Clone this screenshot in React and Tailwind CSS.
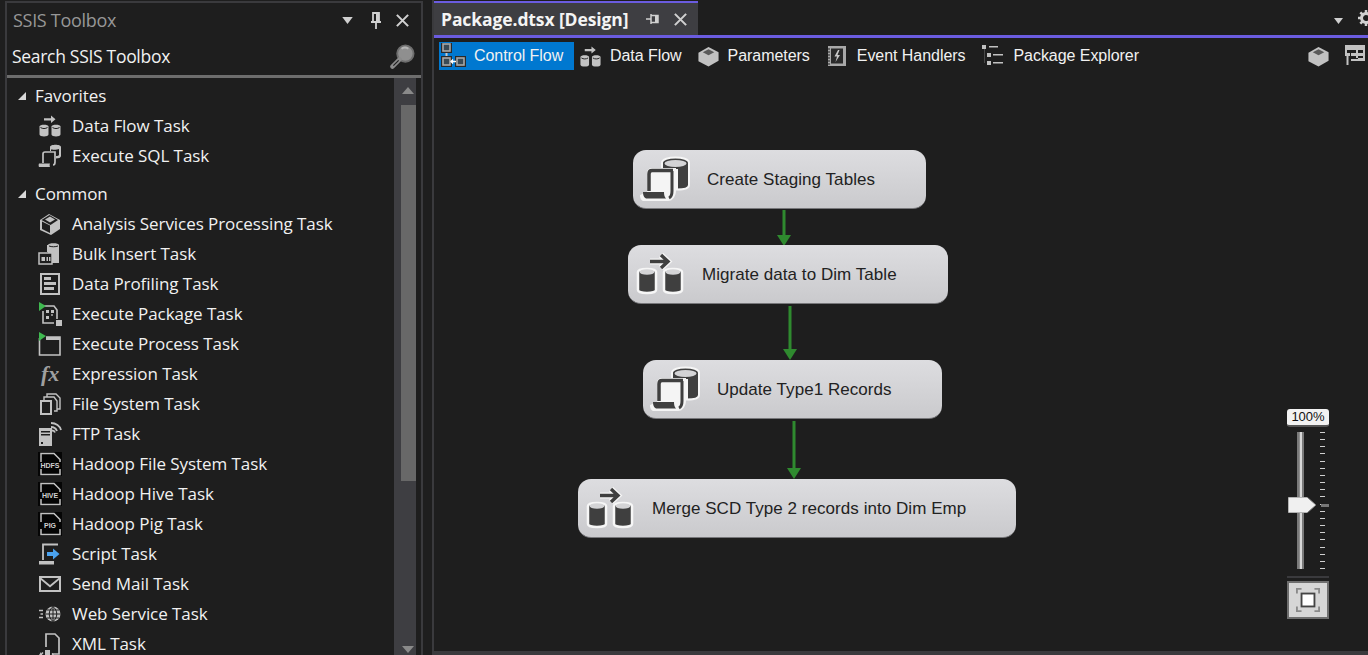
import React from 'react';

const SEGOE = "font-['Open_Sans',sans-serif]";

// ---- small task icons, all on a 24 box ----
const Box = ({ children, className = 'w-6 h-6', fill = '#c2c2c2' }) => (
  <svg viewBox="0 0 24 24" className={`${className} shrink-0`} fill={fill}>{children}</svg>
);

const DataFlowIcon = ({ className }) => (
  <Box className={className}>
    <path d="M6 4.200h7V1.500l4.500 3.700L13 8.900V6.400H6z" />
    <path d="M1.500 12.500c0-2.400 9-2.400 9 0v8c0 2.600-9 2.600-9 0z" />
    <path d="M13.500 12.500c0-2.400 9-2.400 9 0v8c0 2.600-9 2.600-9 0z" />
    <path d="M2.500 13.500c2 1.400 5 1.400 7 0M14.500 13.500c2 1.400 5 1.400 7 0" stroke="#1e1e1e" fill="none" />
  </Box>
);

const ExecSqlIcon = ({ className }) => (
  <Box className={className}>
    <path d="M12 3c0-3 11-3 11 0v9c0 1.700-2.500 2.500-5 2.500V12c1.500 0 3-.5 3-1V5c-2 1-7 1-8 .3V7h-1z" />
    <path d="M5 19V10c0-1 1-2 2-2h10v10c0 2-1 3-2 3" stroke="#c2c2c2" strokeWidth="1.700" fill="none" />
    <path d="M1 23c-.5-1-.5-2.500 0-3.500h11c-.5 1-.5 2.500 0 3.500z" />
  </Box>
);

const CubeIcon = ({ className }) => (
  <Box className={className}>
    <path d="M1.500 8L12 2l10.500 5.500v9L12 22.500 1.500 17z" />
    <path d="M6 7.500L12 4.500l6 3-6 3.200z" fill="#5a5a5a" />
  </Box>
);

const AnalysisIcon = () => (
  <Box>
    <path d="M2 8l9-6 11 6v9l-9 6-11-5z" />
    <path d="M3.500 8l8-5 8.500 5-7.500 5z" fill="#1e1e1e" />
    <path d="M4 9.500l8 4v7.500l-8-4z" fill="#1e1e1e" />
    <path d="M7 7.500l5-3 5 3-5 3z" fill="#c2c2c2" />
  </Box>
);

const BulkIcon = () => (
  <Box>
    <path d="M10 3c0-2.400 11-2.400 11 0v18H10V10h-1V3z" />
    <path d="M11 4c2.500 1 6.500 1 9 0" stroke="#1e1e1e" fill="none" />
    <rect x="1" y="11" width="13" height="11" fill="#1e1e1e" stroke="#c2c2c2" strokeWidth="1.500" />
    <rect x="3.500" y="15" width="3.500" height="4" />
    <rect x="8.500" y="15" width="1.500" height="4" />
    <rect x="11" y="15" width="1.500" height="4" />
  </Box>
);

const ProfilingIcon = () => (
  <Box>
    <path d="M3 2h18v20H3z" fill="none" stroke="#c2c2c2" strokeWidth="2" />
    <rect x="6" y="5" width="7" height="3" />
    <rect x="6" y="10" width="12" height="3" />
    <rect x="6" y="15" width="10" height="3" />
  </Box>
);

const FlagTriangle = () => <path d="M1 0l7 4-7 5z" fill="#3fb950" />;

const ExecPackageIcon = () => (
  <Box>
    <path d="M6 4h10l3 4v9" fill="none" stroke="#c2c2c2" strokeWidth="1.600" />
    <path d="M5 9v12h11" fill="none" stroke="#c2c2c2" strokeWidth="1.600" />
    <rect x="8" y="8" width="3" height="3" />
    <rect x="13" y="8" width="3" height="3" />
    <rect x="8" y="14" width="3" height="3" />
    <rect x="13" y="12" width="2" height="2" fill="#8a8a8a" />
    <rect x="18" y="18" width="6" height="6" />
    <FlagTriangle />
  </Box>
);

const ExecProcessIcon = () => (
  <Box>
    <path d="M1.500 6v17h20.500V5H8" fill="none" stroke="#c2c2c2" strokeWidth="1.600" />
    <rect x="8" y="5" width="14" height="3" />
    <FlagTriangle />
  </Box>
);

const FileSystemIcon = () => (
  <Box>
    <path d="M9 5V2h9l4 4v11h-3" fill="none" stroke="#c2c2c2" strokeWidth="1.400" />
    <path d="M6 8V5h10l3 4v10h-3" fill="none" stroke="#c2c2c2" strokeWidth="1.400" />
    <path d="M3 9h10v13H3z" fill="none" stroke="#c2c2c2" strokeWidth="2" />
  </Box>
);

const FtpIcon = () => (
  <Box>
    <path d="M1 6h13v18H1z" />
    <rect x="3" y="9" width="9" height="1.500" fill="#1e1e1e" />
    <rect x="3" y="12" width="9" height="1.500" fill="#1e1e1e" />
    <rect x="3" y="20" width="2" height="2" fill="#1e1e1e" />
    <path d="M13 1c5 0 9 3 10 7M13 5c3 0 5 1.500 6 4M14 8.500c1.500 0 2.500.5 3 2" fill="none" stroke="#c2c2c2" strokeWidth="1.800" />
  </Box>
);

const HadoopIcon = ({ label }) => (
  <svg viewBox="0 0 24 24" className="w-6 h-6 shrink-0">
    <rect width="24" height="24" fill="#050505" />
    <path d="M3 10V1.500h13l6 6V10M3 17v5.500h19V17" fill="none" stroke="#c2c2c2" strokeWidth="1.500" />
    <text x="12" y="16" textAnchor="middle" fontSize="7" fontWeight="700" fontFamily="Liberation Sans" fill="#d0d0d0">{label}</text>
  </svg>
);

const ScriptIcon = () => (
  <Box>
    <path d="M5 18V2.500h15" fill="none" stroke="#c2c2c2" strokeWidth="1.800" />
    <path d="M1 22.500v-3.500h15v3.500z" />
    <path d="M9 10h6V6.500l6.500 5.500-6.500 5.500V14H9z" fill="#4aa3f0" />
  </Box>
);

const MailIcon = () => (
  <Box>
    <path fillRule="evenodd" d="M1 4h22v16H1zM3.500 6l8.500 7 8.500-7zM3 8v10h18V8l-9 7.500z" />
  </Box>
);

const WebIcon = () => (
  <Box>
    <circle cx="15" cy="12" r="7.500" />
    <path d="M7.500 12h15M15 4.500v15M9 8h12M9 16h12M15 4.500c-5 4-5 11 0 15M15 4.500c5 4 5 11 0 15" stroke="#1e1e1e" fill="none" />
    <path d="M1 8.500h4M2.500 12h2.500M1 15.500h4" stroke="#c2c2c2" strokeWidth="1.500" />
  </Box>
);

const XmlIcon = () => (
  <Box>
    <path d="M8 15V2h9l4 4v16h-7" fill="none" stroke="#c2c2c2" strokeWidth="1.700" />
    <rect x="7" y="18" width="5" height="6" />
    <path d="M2 24l3-3.500M16 24l-2-2.500" stroke="#c2c2c2" fill="none" strokeWidth="1.400" />
    <path d="M1 23l2-3 1 4z" />
  </Box>
);

const FxIcon = () => (
  <span className="w-6 h-6 shrink-0 flex items-center justify-center font-['Liberation_Serif',serif] italic font-bold text-[22px] leading-none text-[#a0a0a0]">fx</span>
);

const SearchIcon = () => (
  <svg viewBox="0 0 26 26" className="w-[25px] h-[25px]">
    <circle cx="16" cy="10" r="8.500" fill="#8f8f8f" stroke="#6e6e6e" strokeWidth="2" />
    <path d="M12 5c2-1.500 5-1.500 7 0" stroke="#b5b5b5" strokeWidth="2" fill="none" />
    <path d="M10 16L2.500 23.500" stroke="#8a8a8a" strokeWidth="4.500" strokeLinecap="round" />
    <path d="M3.500 22.500L9 17" stroke="#1e1e1e" strokeWidth="1.200" />
  </svg>
);

const Cross = ({ className, color = '#d0d0d0' }) => (
  <svg viewBox="0 0 16 16" className={className}>
    <path d="M2 2l12 12M14 2L2 14" stroke={color} strokeWidth="2.200" fill="none" />
  </svg>
);

const DownCaret = ({ className = 'w-3.5 h-2' }) => (
  <svg viewBox="0 0 14 8" className={className}><path d="M1 0h12L7 8z" fill="#d0d0d0" /></svg>
);

const Expander = () => (
  <svg viewBox="0 0 10 10" className="w-[10px] h-[10px] shrink-0"><path d="M9 1v8H1z" fill="#d8d8d8" /></svg>
);

const Task = ({ icon, label }) => (
  <div className="flex items-center h-[30px] pl-[33px] gap-[10px] whitespace-nowrap">
    {icon}
    <span>{label}</span>
  </div>
);

const Category = ({ label, className = '' }) => (
  <div className={`flex items-center h-[30px] pl-[12px] gap-[8px] ${className}`}>
    <Expander />
    <span>{label}</span>
  </div>
);

const COMMON_TASKS = [
  ['Analysis Services Processing Task', <AnalysisIcon />],
  ['Bulk Insert Task', <BulkIcon />],
  ['Data Profiling Task', <ProfilingIcon />],
  ['Execute Package Task', <ExecPackageIcon />],
  ['Execute Process Task', <ExecProcessIcon />],
  ['Expression Task', <FxIcon />],
  ['File System Task', <FileSystemIcon />],
  ['FTP Task', <FtpIcon />],
  ['Hadoop File System Task', <HadoopIcon label="HDFS" />],
  ['Hadoop Hive Task', <HadoopIcon label="HIVE" />],
  ['Hadoop Pig Task', <HadoopIcon label="PIG" />],
  ['Script Task', <ScriptIcon />],
  ['Send Mail Task', <MailIcon />],
  ['Web Service Task', <WebIcon />],
  ['XML Task', <XmlIcon />],
];

const Toolbox = () => (
  <aside className={`ml-[5px] mt-[1px] w-[418px] shrink-0 flex flex-col border-x-2 border-t-2 border-[#3a3a3d] ${SEGOE} text-[#f1f1f1] text-[17px] tracking-[-0.06px]`}>
    <div className="flex items-center h-[35px] pl-[6px] pr-[11px] text-[18px] tracking-[-0.3px] text-[#979797]">
      <span className="flex-1">SSIS Toolbox</span>
      <DownCaret className="w-[13px] h-[7px] mr-[16px]" />
      <svg viewBox="0 0 12 18" className="w-[12px] h-[18px] mr-[13px]">
        <path d="M3 1h6v9H3zM1 10h10M6 10v7" stroke="#d0d0d0" strokeWidth="1.800" fill="none" />
        <rect x="6" y="1" width="3" height="9" fill="#d0d0d0" />
      </svg>
      <Cross className="w-[15px] h-[15px]" />
    </div>
    <div className="flex items-center h-[40px] pl-[5px] pr-[6px] border-b-[3px] border-[#6d6d6d] text-[17.5px] tracking-[-0.3px]">
      <span className="flex-1">Search SSIS Toolbox</span>
      <SearchIcon />
    </div>
    <div className="flex flex-1 min-h-0 overflow-hidden">
      <div className="flex-1 pt-[3px] overflow-hidden -ml-[2px]">
        <Category label="Favorites" />
        <Task icon={<DataFlowIcon />} label="Data Flow Task" />
        <Task icon={<ExecSqlIcon />} label="Execute SQL Task" />
        <Category label="Common" className="mt-[8px]" />
        {COMMON_TASKS.map(([label, icon]) => <Task key={label} icon={icon} label={label} />)}
      </div>
      {/* scrollbar */}
      <div className="w-[22px] bg-[#3e3e42] flex flex-col items-end shrink-0 mr-[5px] relative">
        <div className="w-full flex justify-center pl-[5px] pt-[9px] h-[27px]">
          <svg viewBox="0 0 12 7" className="w-3 h-[7px]"><path d="M6 0l6 7H0z" fill="#8a8a8a" /></svg>
        </div>
        <div className="w-[15px] h-[376px] bg-[#686868]" />
        <div className="w-full flex justify-center pl-[5px] mt-[165px]">
          <svg viewBox="0 0 12 7" className="w-3 h-[7px]"><path d="M0 0h12L6 7z" fill="#8a8a8a" /></svg>
        </div>
      </div>
    </div>
  </aside>
);

// ---- designer toolbar icons ----
const FlowBox = ({ x, y }) => (
  <g>
    <rect x={x - 2} y={y - 2} width="11" height="11" fill="#2a2a2a" />
    <rect x={x} y={y} width="7" height="7" fill="#3a4a55" stroke="#a8a8a8" strokeWidth="1.600" />
  </g>
);

const ControlFlowIcon = () => (
  <svg viewBox="0 0 26 26" className="w-[26px] h-[26px] shrink-0">
    <path d="M6.500 8v7" stroke="#c8c8c8" strokeWidth="2" />
    <FlowBox x={3} y={1} />
    <FlowBox x={3} y={15} />
    <FlowBox x={17} y={15} />
    <path d="M11 18.500h5M13 16.500l-2 2 2 2" stroke="#fff" strokeWidth="1.300" fill="none" />
  </svg>
);

const EventIcon = () => (
  <svg viewBox="0 0 20 20" className="w-5 h-5 shrink-0">
    <rect x="1" y="0" width="18" height="20" fill="#a8a8a8" />
    <rect x="4" y="2.500" width="12" height="15" fill="#2a2a2a" />
    <path d="M11 4L7.500 10.500h2.500L8.500 16l4.500-7h-2.500L12.500 4z" fill="#c8c8c8" />
    <path d="M1 3h2M1 6h2M1 9h2M1 12h2M1 15h2M1 18h2" stroke="#1e1e1e" />
  </svg>
);

const ExplorerIcon = () => (
  <svg viewBox="0 0 22 22" className="w-[22px] h-[22px] shrink-0" fill="#c2c2c2">
    <rect x="0" y="0" width="4" height="4" />
    <rect x="7" y="1" width="9" height="1.500" />
    <rect x="5" y="8" width="4" height="4" />
    <rect x="11" y="9" width="10" height="1.500" />
    <rect x="5" y="16" width="4" height="4" />
    <rect x="11" y="17" width="10" height="1.500" />
    <rect x="2" y="4" width="1" height="14" fill="#4a4a4a" />
  </svg>
);

const VarGridIcon = () => (
  <svg viewBox="0 0 22 24" className="w-[22px] h-6 shrink-0" fill="#c2c2c2">
    <path d="M2 1h20v16H8v-2h12v-3h-5v2h-2v-2H8V9h5V6H4v3H2zM15 6v3h5V6zM15 14v1h5v-1z" />
    <rect x="2" y="9" width="5" height="3" />
    <rect x="3.500" y="12" width="2" height="9" />
  </svg>
);

const ToolItem = ({ icon, label, className = '' }) => (
  <div className={`flex items-center h-7 whitespace-nowrap ${className}`}>
    {icon}
    <span>{label}</span>
  </div>
);

// ---- node icons: same shapes in dark with a white halo ----
const NodeCylinder = ({ x }) => (
  <g transform={`translate(${x} 0)`}>
    <path d="M0 18c0-4 18-4 18 0v18c0 4-18 4-18 0z" fill="#3f3f3f" stroke="#f6f6f6" strokeWidth="2.500" />
    <ellipse cx="9" cy="18" rx="7.500" ry="2.800" fill="#d4d4d6" />
  </g>
);

const NodeFlowIcon = () => (
  <svg viewBox="0 0 52 42" className="w-[52px] h-[42px]">
    <g transform="translate(2 1)">
      <path d="M13 7.500h18M24 1l7 6.500-7 6.500" stroke="#f6f6f6" strokeWidth="6" fill="none" />
      <path d="M13 7.500h18M24 1l7 6.500-7 6.500" stroke="#3f3f3f" strokeWidth="3.400" fill="none" />
      <NodeCylinder x={1} />
      <NodeCylinder x={27} />
    </g>
  </svg>
);

const NodeSqlIcon = () => (
  <svg viewBox="0 0 52 46" className="w-[52px] h-[46px]">
    <path d="M22 7c0-7.500 27-7.500 27 0v22c0 3-5 4.500-12 4.500V14H22z" fill="#3f3f3f" stroke="#f6f6f6" strokeWidth="2" />
    <ellipse cx="35.500" cy="7.500" rx="11" ry="3.400" fill="#d4d4d6" />
    <path d="M7 36V17c0-3 2-5 5-5h24v22c0 6-3 11-8 11H4c-2 0-4-2-4-6z" fill="#f4f4f4" />
    <path d="M9 35V18c0-2 1-3.500 3-3.500h21" stroke="#3f3f3f" strokeWidth="3.500" fill="none" />
    <path d="M32 15v20c0 3-1 6-3 7" stroke="#3f3f3f" strokeWidth="3" fill="none" />
    <path d="M3 36h21c0 3 .5 5 2 6.500H7c-2.500 0-4-2.500-4-6.500z" fill="#3f3f3f" />
  </svg>
);

const NODE_TEXT = "font-['Liberation_Sans',sans-serif] text-[17px] tracking-[0.05px] text-[#222]";

const Node = ({ left, top, width, kind, label, textLeft }) => (
  <div
    className={`absolute h-[59px] rounded-[13px] bg-gradient-to-b from-[#dddde0] to-[#cacacd] border-b border-[#77777a] flex items-center ${NODE_TEXT}`}
    style={{ left, top, width }}
  >
    <div className="pl-[7px] w-[60px] shrink-0">{kind === 'flow' ? <NodeFlowIcon /> : <NodeSqlIcon />}</div>
    <span className="whitespace-nowrap absolute translate-y-px" style={{ left: textLeft }}>{label}</span>
  </div>
);

const Arrow = ({ left, top, height }) => (
  <svg className="absolute" style={{ left, top }} width="16" height={height} viewBox={`0 0 16 ${height}`}>
    <path d={`M8 0V${height - 8}`} stroke="#2f8a2f" strokeWidth="3" />
    <path d={`M1 ${height - 11}H15L8 ${height}z`} fill="#2f8a2f" />
  </svg>
);

const ZoomSlider = () => (
  <div className="absolute left-[852px] top-[339px] w-[44px] flex flex-col items-center">
    <div className="w-[42px] h-[18px] bg-[#f2f2f2] rounded-[3px] border-b-2 border-[#555] text-[13px] leading-[16px] text-center text-[#111] font-['Liberation_Sans',sans-serif]">100%</div>
    <div className="relative w-[42px] h-[144px] mt-[5px]">
      <div className="absolute left-[10px] top-0 w-[7px] h-[137px] bg-[#8f8f8f] border-x-2 border-[#7a7a7a]">
        <div className="mx-auto w-[2px] h-full bg-[#d8d8d8]" />
      </div>
      <svg viewBox="0 0 29 16" className="absolute left-[1px] top-[65px] w-[29px] h-4">
        <path d="M0 0h19l9 8-9 8H0z" fill="#f0f0f0" stroke="#777" />
      </svg>
      <div className="absolute left-[33px] top-0 w-[7px] h-[137px] flex flex-col justify-between">
        {Array.from({ length: 20 }).map((_, i) => <div key={i} className="h-[1px] w-[5px] bg-[#d0d0d0]" />)}
      </div>
      <div className="absolute left-[34px] top-[72px] w-[8px] h-[3px] bg-[#777]" />
    </div>
    <div className="w-[42px] h-[2px] bg-[#3a3a3d]" />
    <div className="mt-[3px] w-[42px] h-[38px] bg-[#d6d6d6] border-2 border-[#6e6e6e] flex items-center justify-center">
      <svg viewBox="0 0 26 26" className="w-[24px] h-[24px]">
        <path d="M1 6V1h5M20 1h5v5M25 20v5h-5M6 25H1v-5" fill="none" stroke="#8a8a8a" strokeWidth="2" />
        <rect x="6" y="6" width="14" height="14" fill="#fff" stroke="#444" strokeWidth="2" />
      </svg>
    </div>
  </div>
);

export default function App() {
  return (
    <div className="w-[1368px] h-[655px] bg-[#1e1e1e] flex overflow-hidden">
      <Toolbox />
      <main className="ml-[9px] flex-1 min-w-0 flex flex-col border-l-2 border-[#3a3a3d]">
        {/* tab strip */}
        <div className="h-[34px] mt-px flex shrink-0">
          <div className={`w-[264px] border-t-2 border-[#6b5ce0] bg-[#3e3e42] flex items-center pl-[7px] text-[#f4f4f4] font-bold text-[17.500px] tracking-[-0.1px] ${SEGOE}`}>
            <span className="whitespace-nowrap">Package.dtsx [Design]</span>
            <svg viewBox="0 0 14 12" className="w-[14px] h-3 ml-[18px] shrink-0">
              <path d="M5 2.500h7v7H5zM0 6h5M5 1v10" stroke="#d0d0d0" strokeWidth="1.500" fill="none" />
              <rect x="9" y="2" width="3" height="8" fill="#d0d0d0" />
            </svg>
            <Cross className="w-[15px] h-[15px] ml-[13px] shrink-0" />
          </div>
          <div className="flex-1 flex items-center justify-end overflow-hidden">
            <DownCaret className="w-[11px] h-[6px] mr-[14px] mt-[6px]" />
            <svg viewBox="0 0 16 16" className="w-[16px] h-[16px] -mr-[6px] shrink-0">
              <circle cx="8" cy="8" r="4.500" fill="none" stroke="#d0d0d0" strokeWidth="3" />
              <path d="M8 0v3M8 13v3M0 8h3M13 8h3M2.300 2.300l2.200 2.200M11.500 11.500l2.200 2.200M13.700 2.300l-2.200 2.200M4.500 11.500l-2.200 2.200" stroke="#d0d0d0" strokeWidth="2.500" />
            </svg>
          </div>
        </div>
        <div className="h-[3px] bg-[#6b5ce0] shrink-0" />
        {/* designer tabs */}
        <div className="h-[28px] mt-[4px] shrink-0 flex items-center pl-[5px] font-['Liberation_Sans',sans-serif] text-[16px] tracking-[-0.05px] text-[#f1f1f1]">
          <ToolItem icon={<ControlFlowIcon />} label="Control Flow" className="w-[135px] bg-[#0078d0] pl-[1px] gap-[8px]" />
          <ToolItem icon={<DataFlowIcon className="w-[23px] h-[23px]" />} label="Data Flow" className="ml-[5px] gap-[8px]" />
          <ToolItem icon={<CubeIcon className="w-[23px] h-[23px]" />} label="Parameters" className="ml-[15px] gap-[8px]" />
          <ToolItem icon={<EventIcon />} label="Event Handlers" className="ml-[17px] gap-[10px]" />
          <ToolItem icon={<ExplorerIcon />} label="Package Explorer" className="ml-[17px] gap-[9px]" />
          <div className="ml-auto flex items-center gap-[13px] pr-[3px]">
            <CubeIcon className="w-[23px] h-[23px]" />
            <VarGridIcon />
          </div>
        </div>
        {/* free canvas of the control flow */}
        <div className="relative flex-1 min-h-0">
          <Node left={199} top={80} width={293} kind="sql" label="Create Staging Tables" textLeft={74} />
          <Arrow left={342} top={140} height={36} />
          <Node left={194} top={175} width={320} kind="flow" label="Migrate data to Dim Table" textLeft={74} />
          <Arrow left={348} top={236} height={54} />
          <Node left={209} top={290} width={299} kind="sql" label="Update Type1 Records" textLeft={74} />
          <Arrow left={352} top={351} height={58} />
          <Node left={144} top={409} width={438} kind="flow" label="Merge SCD Type 2 records into Dim Emp" textLeft={74} />
          <ZoomSlider />
        </div>
        <div className="h-[4px] bg-[#3a3a3d] shrink-0" />
      </main>
    </div>
  );
}
